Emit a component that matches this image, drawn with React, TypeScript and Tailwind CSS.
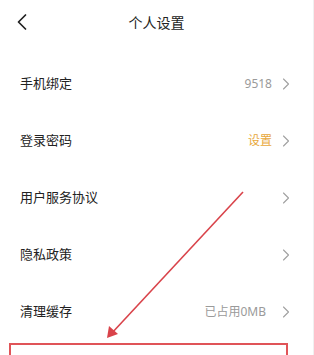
import { ChevronLeft, ChevronRight } from "lucide-react";

const rows: { label: string; value?: string; accent?: boolean; wide?: boolean }[] = [
  { label: "手机绑定", value: "9518" },
  { label: "登录密码", value: "设置", accent: true },
  { label: "用户服务协议" },
  { label: "隐私政策" },
  { label: "清理缓存", value: "已占用0MB", wide: true },
];

export default function App() {
  return (
    <div
      className="relative w-[314px] h-[355px] overflow-hidden bg-white border-r border-[#f0f0f0]"
      style={{ fontFamily: '"Noto Sans", "Noto Sans CJK SC", sans-serif' }}
    >
      {/* Header */}
      <div className="relative h-[44px] flex items-center justify-center">
        <ChevronLeft className="absolute left-[8px] top-[8px] w-[28px] h-[28px] text-[#222]" strokeWidth={1.5} />
        <span className="text-[14px] text-[#222]">个人设置</span>
      </div>

      {/* Settings list */}
      <div className="pt-[11px] flex flex-col">
        {rows.map((r) => (
          <div key={r.label} className="h-[57px] flex items-center pl-[20px] pr-[17px]">
            <span className="flex-1 text-[13px] text-[#222]">{r.label}</span>
            {r.value && (
              <span
                className={`text-[12px] ${r.wide ? "mr-[10px]" : "mr-[4px]"} ${
                  r.accent ? "text-[#e8a83a]" : "text-[#9a9a9a]"
                }`}
              >
                {r.value}
              </span>
            )}
            <ChevronRight className="w-[20px] h-[20px] text-[#a0a0a0]" strokeWidth={1.3} />
          </div>
        ))}
      </div>

      {/* Annotation: arrow + highlight box */}
      <svg className="absolute left-0 top-0 pointer-events-none" width="314" height="355">
        <line x1="243" y1="192" x2="111" y2="334" stroke="#d9434a" strokeWidth="1.6" />
        <polygon points="107,338 109,326 118,334" fill="#d9434a" />
      </svg>
      <div className="absolute left-[9px] top-[343px] w-[279px] h-[40px] border-2 border-[#e05458]" />
    </div>
  );
}
